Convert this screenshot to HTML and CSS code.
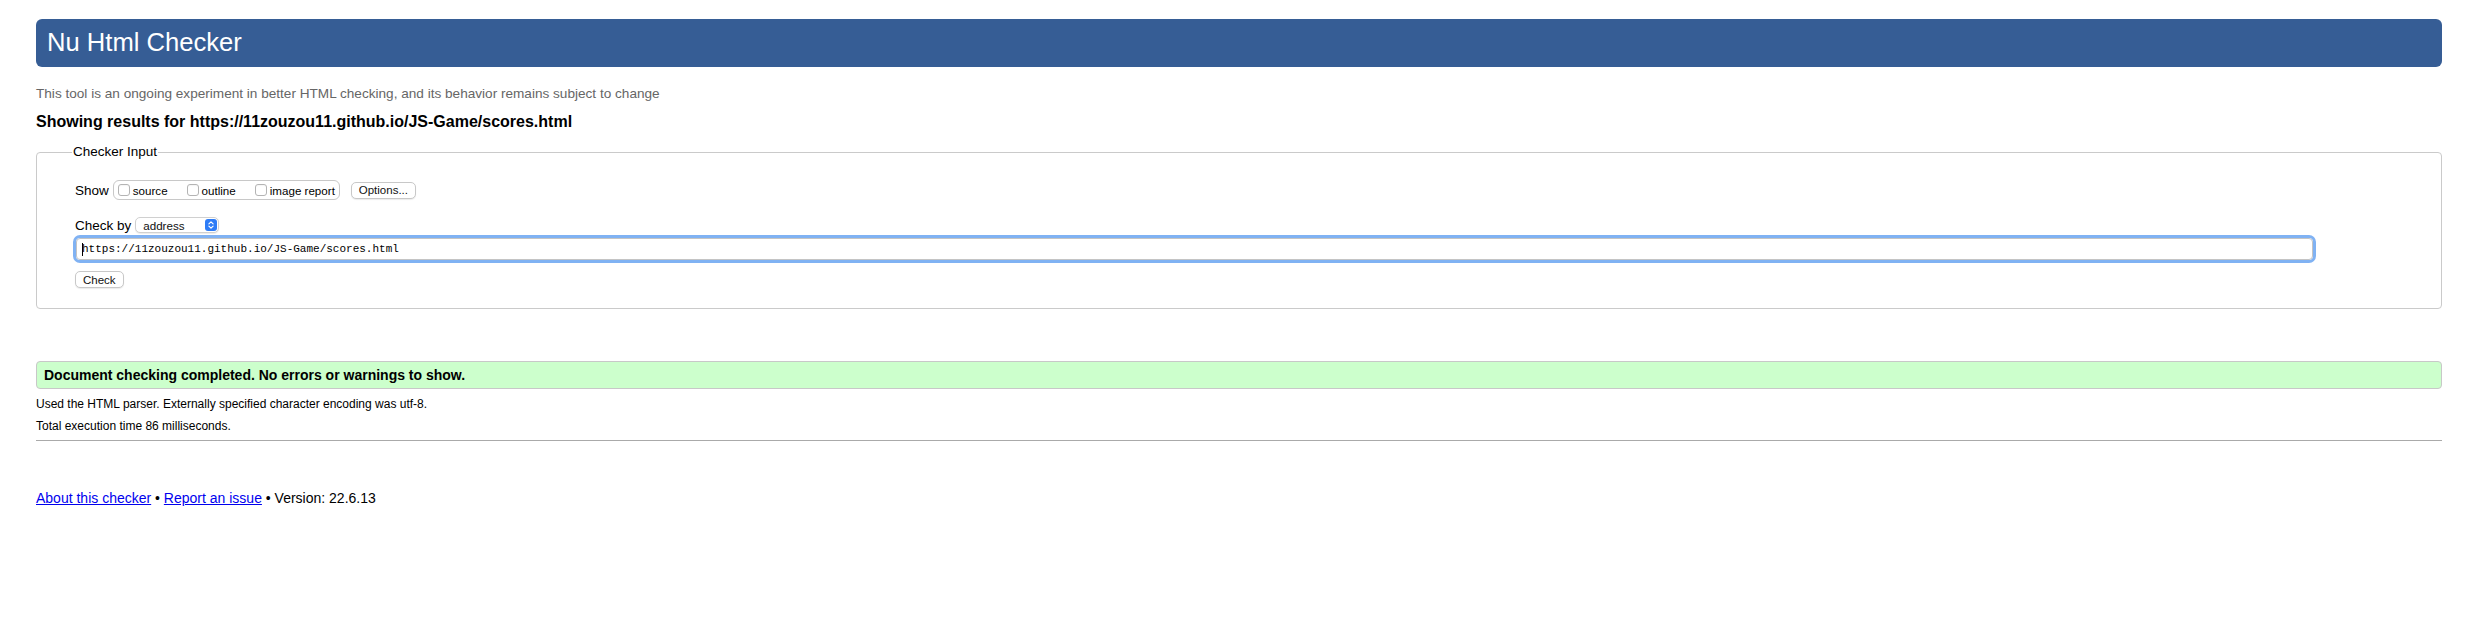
FILE: index.html
```html
<!DOCTYPE html>
<html lang="en">
<head>
<meta charset="utf-8">
<title>Nu Html Checker</title>
<link rel="stylesheet" href="styles.css">
</head>
<body>
<header class="banner"><h1>Nu Html Checker</h1></header>
<p class="intro">This tool is an ongoing experiment in better HTML checking, and its behavior remains subject to change</p>
<h2 class="results">Showing results for https://11zouzou11.github.io/JS-Game/scores.html</h2>
<fieldset class="checker">
  <legend>Checker Input</legend>
  <div class="row row-show">
    <span class="lbl">Show</span>
    <div class="group">
      <label class="opt"><span class="cb"></span><span>source</span></label>
      <label class="opt"><span class="cb"></span><span>outline</span></label>
      <label class="opt"><span class="cb"></span><span>image report</span></label>
    </div>
    <span class="btn btn-options">Options...</span>
  </div>
  <div class="row row-by">
    <span class="lbl">Check by</span>
    <div class="select"><span>address</span>
      <svg class="sel-icon" width="12" height="12" viewBox="0 0 12 12"><rect width="12" height="12" rx="3" fill="#2e7cf6"/><path d="M3.9 4.9 L6 2.9 L8.1 4.9 M3.9 7.1 L6 9.1 L8.1 7.1" stroke="#fff" stroke-width="1.2" fill="none" stroke-linecap="round" stroke-linejoin="round"/></svg>
    </div>
  </div>
  <div class="url"><span class="caret"></span>https://11zouzou11.github.io/JS-Game/scores.html</div>
  <span class="btn btn-check">Check</span>
</fieldset>
<div class="success">Document checking completed. No errors or warnings to show.</div>
<p class="note note-first">Used the HTML parser. Externally specified character encoding was utf-8.</p>
<p class="note">Total execution time 86 milliseconds.</p>
<hr class="rule">
<p class="footer"><a href="#">About this checker</a> • <a href="#">Report an issue</a> • Version: 22.6.13</p>
</body>
</html>
```
FILE: styles.css
```css
body {
  margin: 0;
  padding: 19px 45px 0 36px;
  font-family: "Liberation Sans", Arial, Helvetica, sans-serif;
  color: #000;
  background: #fff;
}

.banner {
  height: 48px;
  box-sizing: border-box;
  background: #365d95;
  border-radius: 6px;
  color: #fff;
  display: flex;
  align-items: center;
  padding-left: 11px;
}
.banner h1 {
  margin: 0;
  font-size: 25.6px;
  font-weight: normal;
  line-height: 1;
}

.intro {
  margin: 18px 0 0;
  font-size: 13.6px;
  line-height: 17px;
  color: #666;
}

.results {
  margin: 10px 0 0;
  font-size: 16px;
  line-height: 20px;
  font-weight: bold;
}

.checker {
  margin: 12px 0 0;
  padding: 20px 128px 20px 38px;
  border: 1px solid #cacaca;
  border-radius: 4px;
  min-width: 0;
}
.checker legend {
  font-size: 13.5px;
  line-height: 16px;
  padding: 0 1px;
  margin-left: -3px;
}

.row {
  display: flex;
  align-items: center;
}
.row-show { height: 20px; }
.row-by { height: 16px; margin-top: 17px; }

.lbl {
  font-size: 13.5px;
  margin-right: 4px;
}

.group {
  display: flex;
  align-items: center;
  box-sizing: border-box;
  height: 20px;
  width: 227px;
  border: 1px solid #c8c8c8;
  border-radius: 6px;
  padding-left: 4px;
  gap: 19px;
}
.opt {
  display: flex;
  align-items: center;
  gap: 3px;
  font-size: 11.6px;
}
.cb {
  width: 12px;
  height: 12px;
  box-sizing: border-box;
  border: 1px solid #b4b4b4;
  border-radius: 3px;
  background: #fff;
  box-shadow: inset 0 1px 1px rgba(0,0,0,0.04);
}

.btn {
  display: inline-flex;
  align-items: center;
  box-sizing: border-box;
  height: 17px;
  padding: 0 7px;
  border: 1px solid #c8c8c8;
  border-radius: 5px;
  background: #fff;
  box-shadow: 0 1px 1px rgba(0,0,0,0.08);
  font-size: 11.5px;
  color: #111;
}
.btn-options { margin-left: 11px; }
.btn-check { margin-top: 11px; }

.select {
  display: flex;
  align-items: center;
  justify-content: space-between;
  box-sizing: border-box;
  width: 84px;
  height: 16px;
  border: 1px solid #d0d0d0;
  border-radius: 5px;
  box-shadow: 0 1px 1px rgba(0,0,0,0.08);
  padding: 0 1px 0 7px;
  font-size: 11.6px;
  color: #111;
  background: #fff;
}
.sel-icon { display: block; }

.url {
  display: flex;
  align-items: center;
  box-sizing: border-box;
  height: 22px;
  margin: 5px 0 0 1px;
  width: calc(100% - 1px);
  border: 1px solid #c4c4c4;
  border-radius: 4px;
  outline: 3px solid #80b2f3;
  padding: 0 5px;
  font-family: "Liberation Mono", "DejaVu Sans Mono", monospace;
  font-size: 11px;
  color: #000;
  background: #fff;
}
.caret {
  display: inline-block;
  width: 1px;
  height: 13px;
  background: #000;
  margin-right: -1px;
}

.success {
  margin-top: 52px;
  box-sizing: border-box;
  height: 28px;
  display: flex;
  align-items: center;
  padding-left: 7px;
  border: 1px solid #c8c8c8;
  border-radius: 4px;
  background: #ccffcc;
  font-size: 14px;
  font-weight: bold;
}

.note {
  margin: 0;
  font-size: 12px;
  line-height: 22px;
}
.note-first { margin-top: 4px; }

.rule {
  margin: 3px 0 0;
  border: 0;
  border-top: 1px solid #aaa;
  height: 0;
}

.footer {
  margin: 47px 0 0;
  font-size: 14px;
  line-height: 20px;
}
.footer a { color: #0000ee; }
```
